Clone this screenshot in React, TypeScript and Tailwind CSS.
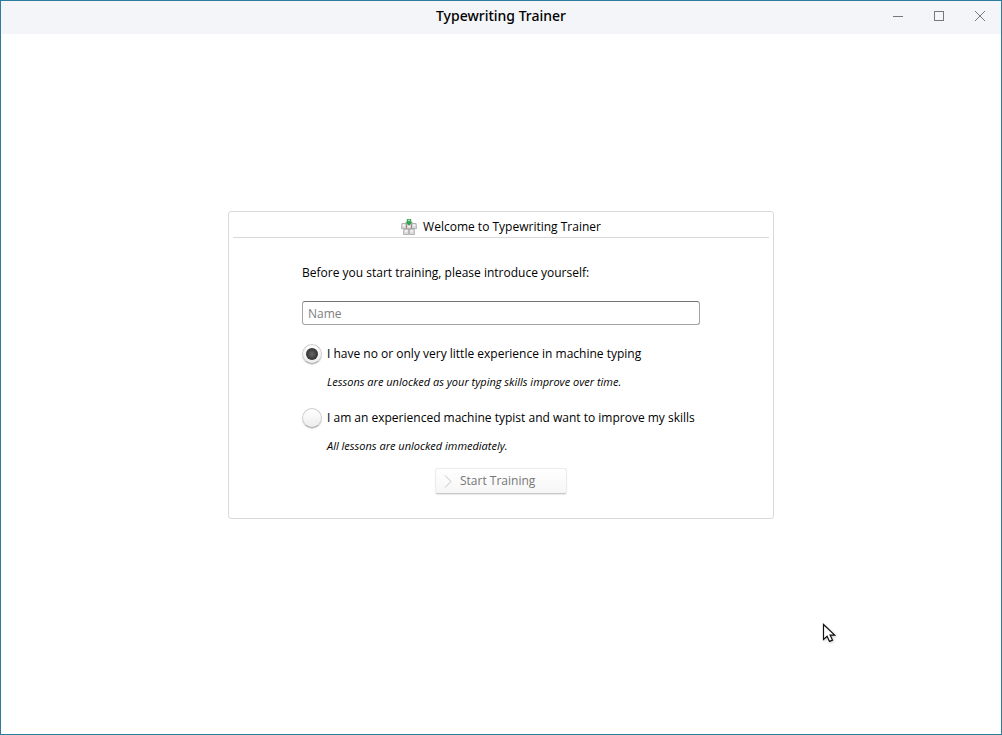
import { useState } from "react";

type Level = "beginner" | "expert";

const levels: { id: Level; label: string; hint: string }[] = [
  {
    id: "beginner",
    label: "I have no or only very little experience in machine typing",
    hint: "Lessons are unlocked as your typing skills improve over time.",
  },
  {
    id: "expert",
    label: "I am an experienced machine typist and want to improve my skills",
    hint: "All lessons are unlocked immediately.",
  },
];

function TitleBar() {
  return (
    <header className="grid h-[33px] shrink-0 grid-cols-[1fr_auto_1fr] items-center bg-[#f4f5f8] pb-[3px]">
      <h1 className="col-start-2 font-['Noto_Sans',sans-serif] text-[14px] leading-5 font-medium text-black">
        Typewriting Trainer
      </h1>
      <div className="flex justify-end gap-[17px] pr-[9px] text-[#77787a]">
        <button type="button" aria-label="Minimize" className="size-6">
          <svg viewBox="0 0 24 24" className="size-6" fill="none" stroke="currentColor" shapeRendering="crispEdges">
            <path d="M7 12.5h10" />
          </svg>
        </button>
        <button type="button" aria-label="Maximize" className="size-6">
          <svg viewBox="0 0 24 24" className="size-6" fill="none" stroke="currentColor" shapeRendering="crispEdges">
            <rect x="7.5" y="7.5" width="9" height="9" />
          </svg>
        </button>
        <button type="button" aria-label="Close" className="size-6">
          <svg viewBox="0 0 24 24" className="size-6" fill="none" stroke="currentColor">
            <path d="M7 7l10 10M17 7L7 17" />
          </svg>
        </button>
      </div>
    </header>
  );
}

function KeysIcon() {
  return (
    <svg viewBox="0 0 16 16" className="size-4" aria-hidden="true">
      <g fill="#dcdcdc" stroke="#a2a2a2" strokeWidth="0.8">
        <path d="M0.9 4.5h4.2l.4 5.2H.5z" />
        <path d="M5.7 4.5h4.6l.2 5.2h-5z" />
        <path d="M10.9 4.5h4.2l.4 5.2h-5z" />
        <path d="M2.9 10h4.8v5.5H2.5z" />
        <path d="M8.3 10h4.8l.4 5.5H8.3z" />
      </g>
      <g stroke="#f7f7f7" strokeWidth="1.6">
        <path d="M1.8 6.2h2.4M11.8 6.2h2.4M4 12h2.6M9.4 12h2.6M6.8 7.2h2.4" />
      </g>
      <path d="M5.5 5.4v4M10.5 5.4v4" stroke="#a77373" strokeWidth="0.8" />
      <path d="M6 .3h4v3h1.4L8 6.4 4.6 3.3H6z" fill="#2fa54d" stroke="#4e9861" strokeWidth="0.5" />
      <path d="M7 1.6h2" stroke="#baf0c6" />
    </svg>
  );
}

function Pointer() {
  return (
    <svg
      viewBox="0 0 16 22"
      className="pointer-events-none absolute top-[621px] left-[820px] h-[22px] w-4 drop-shadow-[1px_1px_1px_#00000033]"
      aria-hidden="true"
    >
      <path
        d="M2.5 2.5v15l3.6-3.3 2.4 5.2 3-1.3-2.4-5h4.6z"
        fill="#fff"
        stroke="#111"
        strokeWidth="1.2"
      />
    </svg>
  );
}

export default function App() {
  const [name, setName] = useState("");
  const [level, setLevel] = useState<Level>("beginner");

  return (
    <div className="relative flex min-h-screen flex-col border border-[#2b7c9d] bg-white font-['Open_Sans',sans-serif] text-[12px] leading-4 text-black">
      <TitleBar />
      <main className="flex grow items-center justify-center pb-[38px]">
        <section className="w-full max-w-[546px] rounded-[3px] border border-[#d9d9d9] px-1 pb-6">
          <h2 className="flex h-[26px] items-center justify-center gap-[6px] border-b border-[#d9d9d9] pt-1">
            <KeysIcon />
            Welcome to Typewriting Trainer
          </h2>
          <form className="px-[69px] pt-[27px]" onSubmit={(e) => e.preventDefault()}>
            <label htmlFor="name" className="block">
              Before you start training, please introduce yourself:
            </label>
            <input
              id="name"
              type="text"
              placeholder="Name"
              value={name}
              onChange={(e) => setName(e.target.value)}
              className="mt-5 block h-6 w-full rounded-[3px] border border-[#a3a3a3] border-t-[#757575] px-[5px] outline-none placeholder:text-[#808080]"
            />
            <div className="mt-[19px] flex flex-col gap-[18px]">
              {levels.map(({ id, label, hint }) => (
                <div key={id}>
                  <label className="flex items-center gap-[5px]">
                    <input
                      type="radio"
                      name="level"
                      checked={level === id}
                      onChange={() => setLevel(id)}
                      aria-describedby={id + "-hint"}
                      className="grid size-5 shrink-0 appearance-none place-items-center rounded-full border border-[#cfcfcf] border-b-[#a8a8a8] bg-linear-to-b from-white to-[#ededed] shadow-[0_1px_1px_#00000026] before:size-3 before:rounded-full checked:before:bg-radial checked:before:from-[#686868] checked:before:to-[#202020]"
                    />
                    {label}
                  </label>
                  <p id={id + "-hint"} className="mt-[10px] pl-[25px] text-[11px] leading-4 italic">
                    {hint}
                  </p>
                </div>
              ))}
            </div>
            <div className="mt-[14px] flex justify-center">
              <button
                type="submit"
                disabled={name.trim() === ""}
                className="flex h-[26px] w-[132px] items-center gap-[6px] rounded-[3px] border border-[#ececec] border-b-[#c8c8c8] bg-linear-to-b from-white to-[#f6f6f6] px-[6px] shadow-[0_1px_1px_#00000018] disabled:text-[#777]"
              >
                <svg viewBox="0 0 12 16" className="h-4 w-3" fill="none" stroke="#c4c4c4" aria-hidden="true">
                  <path d="M3 2.5l6 6-6 6" />
                </svg>
                Start Training
              </button>
            </div>
          </form>
        </section>
      </main>
      <Pointer />
    </div>
  );
}
